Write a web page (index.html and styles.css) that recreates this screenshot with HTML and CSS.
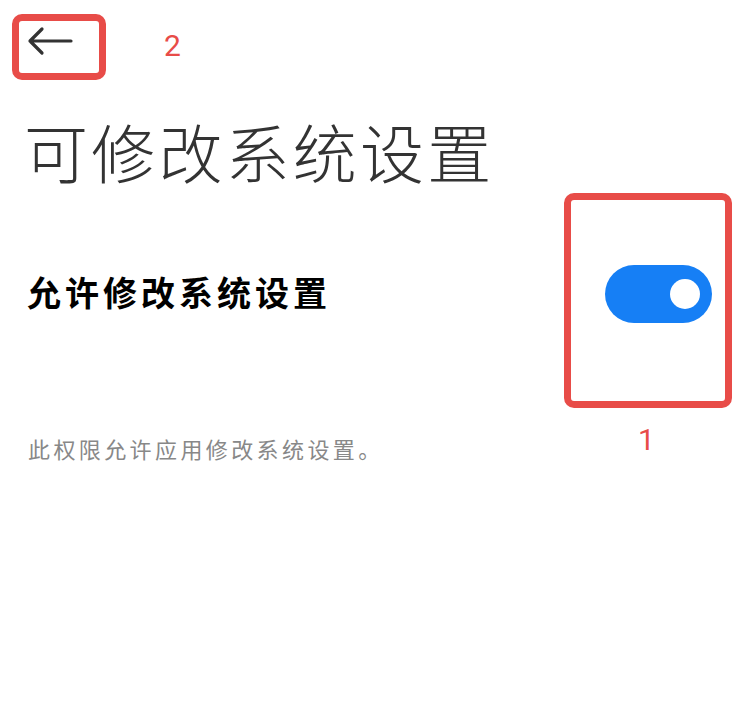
FILE: index.html
```html
<!DOCTYPE html>
<html lang="zh-CN">
<head>
<meta charset="utf-8">
<title>可修改系统设置</title>
<link rel="stylesheet" href="styles.css">
</head>
<body>
<div class="page">
  <header class="topbar">
    <svg class="back" width="46" height="30" viewBox="0 0 46 30" aria-label="返回">
      <path d="M3 15 H44 M15 3 L3 15 L15 27" fill="none" stroke="#333" stroke-width="3.2" stroke-linecap="round" stroke-linejoin="round"/>
    </svg>
  </header>
  <h1 class="title">可修改系统设置</h1>
  <div class="row">
    <div class="label">允许修改系统设置</div>
    <div class="switch"><div class="knob"></div></div>
  </div>
  <p class="desc">此权限允许应用修改系统设置。</p>

  <div class="mark mark-back"></div>
  <div class="mark-num num-2">2</div>
  <div class="mark mark-switch"></div>
  <div class="mark-num num-1">1</div>
</div>
</body>
</html>
```

FILE: styles.css
```css
* { box-sizing: border-box; }
html, body {
  margin: 0;
  padding: 0;
  background: #ffffff;
}
body {
  font-family: "Noto Sans CJK SC", "Noto Sans", sans-serif;
  width: 744px;
  height: 724px;
  overflow: hidden;
}
.page {
  position: relative;
  padding: 0 32px 0 28px;
}
.topbar {
  height: 78px;
  display: flex;
  align-items: center;
}
.back {
  display: block;
  margin-left: -1px;
  margin-top: 3px;
}
.title {
  margin: 36px 0 0 -4px;
  font-size: 64px;
  line-height: 72px;
  font-weight: 300;
  color: #333333;
  letter-spacing: 3.2px;
}
.row {
  margin-top: 79px;
  height: 58px;
  display: flex;
  align-items: center;
  justify-content: space-between;
}
.label {
  font-size: 34px;
  font-weight: 700;
  color: #000000;
  letter-spacing: 4px;
  margin-bottom: 6px;
  margin-left: -1px;
}
.switch {
  width: 107px;
  height: 58px;
  border-radius: 29px;
  background: #167ff5;
  display: flex;
  align-items: center;
  justify-content: flex-end;
  padding-right: 12px;
}
.knob {
  width: 30px;
  height: 30px;
  border-radius: 50%;
  background: #ffffff;
}
.desc {
  margin: 110px 0 0 0;
  font-size: 22px;
  line-height: 30px;
  color: #888888;
  letter-spacing: 3.4px;
}
.mark {
  position: absolute;
  border: 7px solid #e84c48;
  border-radius: 10px;
}
.mark-back {
  left: 12px;
  top: 14px;
  width: 94px;
  height: 66px;
}
.mark-switch {
  left: 564px;
  top: 193px;
  width: 168px;
  height: 215px;
}
.mark-num {
  position: absolute;
  font-family: "Roboto", "Liberation Sans", sans-serif;
  font-size: 30px;
  line-height: 30px;
  color: #e84c48;
}
.num-2 {
  left: 164px;
  top: 31px;
}
.num-1 {
  left: 638px;
  top: 425px;
}
```
